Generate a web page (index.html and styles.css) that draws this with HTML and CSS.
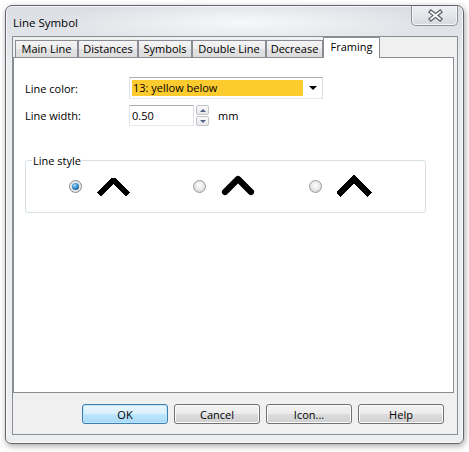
FILE: index.html
```html
<!DOCTYPE html>
<html lang="en">
<head>
<meta charset="utf-8">
<title>Line Symbol</title>
<link rel="stylesheet" href="styles.css">
</head>
<body>
<div class="window">
  <div class="titlebar">
    <span class="title">Line Symbol</span>
    <button class="close" type="button" aria-label="Close">
      <svg width="47" height="20" viewBox="0 0 47 20">
        <path d="M20 7 L29 14 M29 7 L20 14" stroke="#5b5f66" stroke-width="4.2" stroke-linecap="square" fill="none"/>
        <path d="M20 7 L29 14 M29 7 L20 14" stroke="#ffffff" stroke-width="1.8" stroke-linecap="square" fill="none"/>
      </svg>
    </button>
  </div>

  <div class="client">
    <div class="tabs">
      <div class="tab tab-main">Main Line</div>
      <div class="tab tab-dist">Distances</div>
      <div class="tab tab-sym">Symbols</div>
      <div class="tab tab-double">Double Line</div>
      <div class="tab tab-decr">Decrease</div>
      <div class="tab tab-frame active">Framing</div>
    </div>

    <div class="panel">
      <div class="row row-color">
        <span class="label">Line color:</span>
        <div class="combo">
          <span class="combo-value">13: yellow below</span>
          <span class="combo-drop"><span class="arrow-down"></span></span>
        </div>
      </div>

      <div class="row row-width">
        <span class="label">Line width:</span>
        <div class="edit">0.50</div>
        <div class="spin">
          <span class="spin-btn"><span class="spin-up"></span></span>
          <span class="spin-btn"><span class="spin-down"></span></span>
        </div>
        <span class="unit">mm</span>
      </div>

      <fieldset class="group">
        <legend>Line style</legend>
        <div class="options">
          <div class="option opt-1">
            <span class="radio checked"></span>
            <svg class="glyph" width="36" height="26" viewBox="0 0 36 26" shape-rendering="crispEdges">
              <path d="M2.1 21.5 L16.5 7.1 L30.9 21.5" stroke="#000" stroke-width="6.2" fill="none" stroke-linejoin="bevel" stroke-linecap="butt"/>
            </svg>
          </div>
          <div class="option opt-2">
            <span class="radio"></span>
            <svg class="glyph" width="36" height="26" viewBox="0 0 36 26">
              <path d="M4 19 L17 6 L30 19" stroke="#000" stroke-width="6.2" fill="none" stroke-linejoin="round" stroke-linecap="round"/>
            </svg>
          </div>
          <div class="option opt-3">
            <span class="radio"></span>
            <svg class="glyph" width="36" height="26" viewBox="0 0 36 26" shape-rendering="crispEdges">
              <path d="M1.5 21.8 L17 6.3 L32.5 21.8" stroke="#000" stroke-width="6.2" fill="none" stroke-linejoin="miter" stroke-linecap="butt"/>
            </svg>
          </div>
        </div>
      </fieldset>
    </div>

    <div class="buttons">
      <button class="btn default" type="button">OK</button>
      <button class="btn" type="button">Cancel</button>
      <button class="btn" type="button">Icon...</button>
      <button class="btn" type="button">Help</button>
    </div>
  </div>
</div>
</body>
</html>
```

FILE: styles.css
```css
* {
  box-sizing: border-box;
}

html,
body {
  margin: 0;
  padding: 0;
}

body {
  width: 469px;
  height: 452px;
  overflow: hidden;
  background: #ffffff;
  font-family: "Open Sans", "Noto Sans", "DejaVu Sans", sans-serif;
  font-size: 11px;
  line-height: 15px;
  color: #000000;
}

/* ---------- window frame ---------- */
.window {
  margin: 5px 0 0 5px;
  width: 459px;
  height: 439px;
  display: flex;
  flex-direction: column;
  padding: 0 5px 8px 6px;
  border: 1px solid #62666c;
  border-radius: 7px 7px 6px 6px;
  background:
    radial-gradient(ellipse 190px 22px at 52% 16px, rgba(255, 255, 255, 0.75), rgba(255, 255, 255, 0) 100%),
    linear-gradient(#dadee3 0, #e2e5e9 34px, #eaecef 60px, #eceef0 100%);
  box-shadow:
    inset 0 0 0 1px rgba(255, 255, 255, 0.75),
    1px 2px 6px rgba(0, 0, 0, 0.35);
}

.titlebar {
  height: 30px;
  display: flex;
  align-items: flex-start;
}

.title {
  margin-top: 9px;
  padding-left: 1px;
  font-size: 11.5px;
  line-height: 15px;
}

.close {
  margin-left: auto;
  width: 47px;
  height: 20px;
  padding: 0;
  border: 1px solid #8d9096;
  border-top: none;
  border-radius: 0 0 5px 5px;
  background: linear-gradient(#eef0f3 0, #e3e6ea 50%, #d6dadf 100%);
  box-shadow: inset 0 -1px 0 rgba(255, 255, 255, 0.8), inset 1px 0 0 rgba(255, 255, 255, 0.6), inset -1px 0 0 rgba(255, 255, 255, 0.6);
}

.close svg {
  display: block;
  margin: -1px 0 0 -1px;
}

/* ---------- client area ---------- */
.client {
  flex: 1;
  display: flex;
  flex-direction: column;
  border: 1px solid #8a8d92;
  background: #f0f0f0;
}

.tabs {
  height: 20px;
  display: flex;
  align-items: flex-end;
  padding-left: 2px;
}

.tab {
  height: 17px;
  border: 1px solid #898c95;
  border-bottom: none;
  background: linear-gradient(#f4f4f4 0, #ececec 50%, #e2e2e2 51%, #dcdcdc 100%);
  text-align: center;
  line-height: 15px;
  white-space: nowrap;
}

.tab-main { width: 63px; }
.tab-dist { width: 60px; }
.tab-sym { width: 54px; }
.tab-double { width: 74px; }
.tab-decr { width: 57px; }

.tab.active {
  position: relative;
  z-index: 1;
  width: 57px;
  height: 21px;
  margin-bottom: -1px;
  padding-top: 1px;
  background: #ffffff;
}

.panel {
  height: 336px;
  margin-right: 3px;
  border: 1px solid #898c95;
  background: #ffffff;
  padding: 19px 0 0 11px;
}

.row {
  display: flex;
  align-items: center;
}

.row-width {
  margin-top: 6px;
}

.label {
  width: 104px;
}

.combo {
  width: 194px;
  height: 22px;
  display: flex;
  padding: 2px 0 2px 2px;
  border: 1px solid;
  border-color: #abadb3 #dbdfe6 #e3e9ef #e2e3ea;
  background: #ffffff;
}

.combo-value {
  width: 171px;
  height: 16px;
  padding-left: 1px;
  background: #fecb2f;
  line-height: 16px;
}

.combo-drop {
  flex: 1;
  display: flex;
  align-items: center;
  justify-content: center;
}

.arrow-down {
  width: 0;
  height: 0;
  margin-left: 1px;
  border-left: 4px solid transparent;
  border-right: 4px solid transparent;
  border-top: 4px solid #000000;
}

.edit {
  width: 65px;
  height: 21px;
  padding: 2px 0 0 2px;
  border: 1px solid;
  border-color: #abadb3 #dbdfe6 #e3e9ef #e2e3ea;
  background: #ffffff;
}

.spin {
  margin-left: 2px;
  width: 13px;
  height: 21px;
  display: flex;
  flex-direction: column;
  gap: 1px;
}

.spin-btn {
  height: 10px;
  display: flex;
  align-items: center;
  justify-content: center;
  border: 1px solid #c3c5ca;
  border-radius: 2px;
  background: linear-gradient(#fbfbfb, #e6e6e6);
}

.spin-up,
.spin-down {
  width: 0;
  height: 0;
  border-left: 3px solid transparent;
  border-right: 3px solid transparent;
}

.spin-up {
  border-bottom: 3px solid #4f6280;
}

.spin-down {
  border-top: 3px solid #4f6280;
}

.unit {
  margin-left: 9px;
}

/* ---------- line style group ---------- */
.group {
  margin: 27px 27px 0 0;
  min-width: 0;
  padding: 5px 0 13px 0;
  border: 1px solid #d5dfe5;
  border-radius: 3px;
}

.group legend {
  margin-left: 6px;
  padding: 0 1px;
  line-height: 15px;
}

.options {
  display: flex;
  padding-left: 43px;
}

.option {
  display: flex;
  align-items: center;
  height: 26px;
}

.opt-1 { width: 124px; }
.opt-2 { width: 116px; }

.radio {
  position: relative;
  width: 13px;
  height: 13px;
  margin-right: 15px;
  border-radius: 50%;
  border: 1px solid #9a9c9f;
  background: radial-gradient(circle at 50% 40%, #ffffff 0, #f0f0f0 35%, #c9cacb 100%);
}

.radio.checked {
  border-color: #8a8c90;
  background: radial-gradient(circle at 50% 45%, #f6f6f6 0, #dcdcdc 100%);
}

.radio.checked::after {
  content: "";
  position: absolute;
  left: 2px;
  top: 2px;
  width: 7px;
  height: 7px;
  border-radius: 50%;
  background: radial-gradient(circle at 40% 35%, #a9e2ff 0, #3d95d4 40%, #15598f 80%, #0c3e66 100%);
}

.glyph {
  display: block;
}

/* ---------- dialog buttons ---------- */
.buttons {
  display: flex;
  justify-content: flex-end;
  gap: 6px;
  margin-top: 11px;
  padding-right: 13px;
}

.btn {
  width: 86px;
  height: 20px;
  padding: 0;
  font-family: inherit;
  font-size: 11px;
  line-height: 15px;
  color: #000000;
  border: 1px solid #707070;
  border-radius: 3px;
  background: linear-gradient(#f2f2f2 0, #ebebeb 50%, #dddddd 51%, #cfcfcf 100%);
  box-shadow: inset 0 0 0 1px #fcfcfc;
}

.btn.default {
  border-color: #3c7fb1;
  background: linear-gradient(#eaf6fd 0, #d9f0fc 50%, #bee6fd 51%, #a7d9f5 100%);
  box-shadow: inset 0 0 0 1px #bfe6fd;
}
```
